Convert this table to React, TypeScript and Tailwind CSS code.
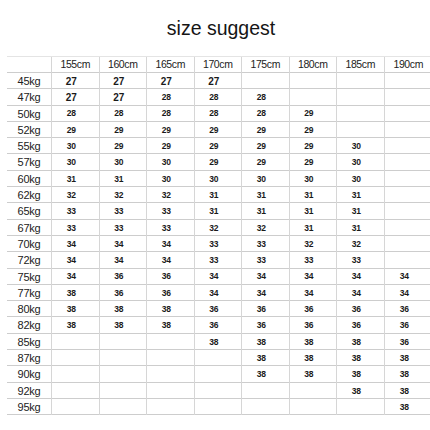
import React from "react";

const heights = ["155cm", "160cm", "165cm", "170cm", "175cm", "180cm", "185cm", "190cm"];

// weight -> sizes per height column, "" = empty cell
const rows: [string, string[]][] = [
  ["45kg", ["27", "27", "27", "27", "", "", "", ""]],
  ["47kg", ["27", "27", "28", "28", "28", "", "", ""]],
  ["50kg", ["28", "28", "28", "28", "28", "29", "", ""]],
  ["52kg", ["29", "29", "29", "29", "29", "29", "", ""]],
  ["55kg", ["30", "29", "29", "29", "29", "29", "30", ""]],
  ["57kg", ["30", "30", "30", "29", "29", "29", "30", ""]],
  ["60kg", ["31", "31", "30", "30", "30", "30", "30", ""]],
  ["62kg", ["32", "32", "32", "31", "31", "31", "31", ""]],
  ["65kg", ["33", "33", "33", "31", "31", "31", "31", ""]],
  ["67kg", ["33", "33", "33", "32", "32", "31", "31", ""]],
  ["70kg", ["34", "34", "34", "33", "33", "32", "32", ""]],
  ["72kg", ["34", "34", "34", "33", "33", "33", "33", ""]],
  ["75kg", ["34", "36", "36", "34", "34", "34", "34", "34"]],
  ["77kg", ["38", "36", "36", "34", "34", "34", "34", "34"]],
  ["80kg", ["38", "38", "38", "36", "36", "36", "36", "36"]],
  ["82kg", ["38", "38", "38", "36", "36", "36", "36", "36"]],
  ["85kg", ["", "", "", "38", "38", "38", "38", "36"]],
  ["87kg", ["", "", "", "", "38", "38", "38", "38"]],
  ["90kg", ["", "", "", "", "38", "38", "38", "38"]],
  ["92kg", ["", "", "", "", "", "", "38", "38"]],
  ["95kg", ["", "", "", "", "", "", "", "38"]],
];

const rowGrid = "grid grid-cols-[45px_repeat(8,47.5px)] border-b border-[#cdcdcd]";

export default function App() {
  return (
    <div
      className="w-[430px] h-[430px] overflow-hidden bg-white text-[#1a1a1a]"
      style={{ fontFamily: '"Liberation Sans", Arial, sans-serif' }}
    >
      <div className="pt-[16px] h-[40px] pl-[12px] text-center text-[19.5px] leading-[24px] text-[#151515]">
        size suggest
      </div>
      <div className="ml-[7px] mt-[16px]">
        <div className={`${rowGrid} h-[17px] border-t border-t-[#e4e4e4]`}>
          <div className="border-r border-[#d6d6d6]" />
          {heights.map((h, i) => (
            <div
              key={h}
              className={`flex items-center justify-center text-[10.5px] tracking-[-0.4px] text-[#222] ${
                i < heights.length - 1 ? "border-r border-[#d6d6d6]" : ""
              }`}
            >
              {h}
            </div>
          ))}
        </div>
        {rows.map(([w, vals]) => (
          <div key={w} className={`${rowGrid} h-[16.3px]`}>
            <div className="flex items-center justify-center border-r border-[#d6d6d6] text-[11px] tracking-[-0.2px] text-[#222]">
              {w}
            </div>
            {vals.map((v, i) => (
              <div
                key={i}
                className={`flex items-center justify-center pr-[8px] font-bold ${
                  v === "27" ? "text-[10px]" : "text-[8.5px] tracking-[-0.3px]"
                } ${i < vals.length - 1 ? "border-r border-[#d6d6d6]" : ""}`}
              >
                {v}
              </div>
            ))}
          </div>
        ))}
      </div>
    </div>
  );
}
